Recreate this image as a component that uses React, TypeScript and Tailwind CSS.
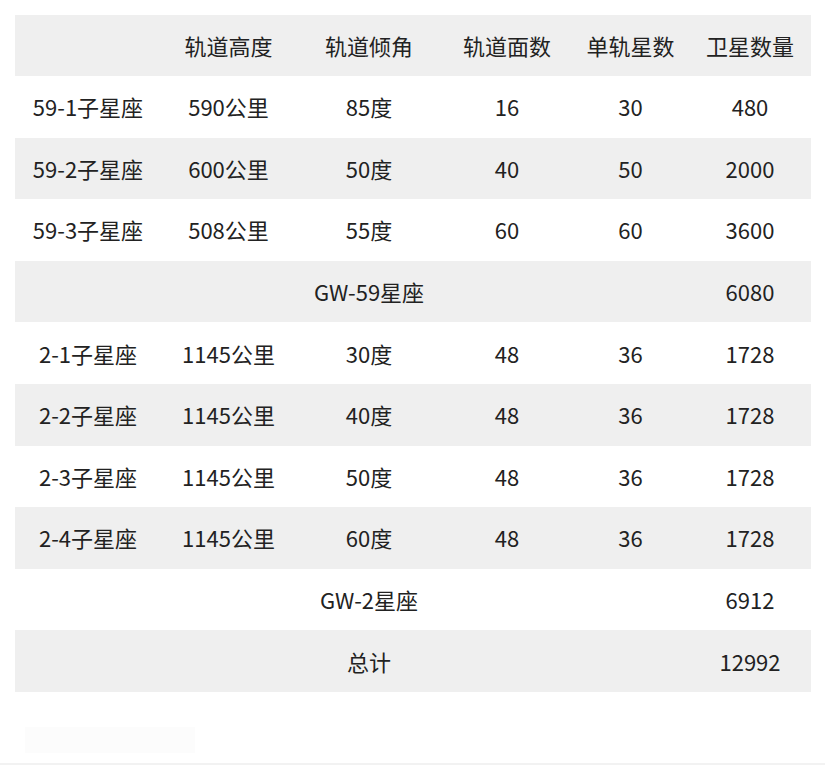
import React from "react";

type Row = { cells: string[] };

const rows: Row[] = [
  { cells: ["59-1子星座", "590公里", "85度", "16", "30", "480"] },
  { cells: ["59-2子星座", "600公里", "50度", "40", "50", "2000"] },
  { cells: ["59-3子星座", "508公里", "55度", "60", "60", "3600"] },
  { cells: ["", "", "GW-59星座", "", "", "6080"] },
  { cells: ["2-1子星座", "1145公里", "30度", "48", "36", "1728"] },
  { cells: ["2-2子星座", "1145公里", "40度", "48", "36", "1728"] },
  { cells: ["2-3子星座", "1145公里", "50度", "48", "36", "1728"] },
  { cells: ["2-4子星座", "1145公里", "60度", "48", "36", "1728"] },
  { cells: ["", "", "GW-2星座", "", "", "6912"] },
  { cells: ["", "", "总计", "", "", "12992"] },
];

const header = ["", "轨道高度", "轨道倾角", "轨道面数", "单轨星数", "卫星数量"];

export default function App() {
  return (
    <div
      className="w-[825px] h-[765px] bg-white relative overflow-hidden text-[#222]"
      style={{ fontFamily: '"Noto Sans CJK SC", "Noto Sans", sans-serif' }}
    >
      <div className="pt-[15px] pl-[15px]">
        <table className="table-fixed border-collapse w-[796px] text-[22px]">
          <colgroup>
            <col className="w-[146px]" />
            <col className="w-[135px]" />
            <col className="w-[146px]" />
            <col className="w-[130px]" />
            <col className="w-[117px]" />
            <col className="w-[122px]" />
          </colgroup>
          <thead>
            <tr className="bg-[#efefef] h-[61px]">
              {header.map((h, i) => (
                <th key={i} className="font-normal text-center whitespace-nowrap p-0">
                  {h}
                </th>
              ))}
            </tr>
          </thead>
          <tbody>
            {rows.map((r, ri) => (
              <tr
                key={ri}
                className={(ri % 2 === 1 ? "bg-[#efefef]" : "bg-white") + " h-[61.6px]"}
              >
                {r.cells.map((c, ci) => (
                  <td key={ci} className="text-center whitespace-nowrap p-0">
                    {c}
                  </td>
                ))}
              </tr>
            ))}
          </tbody>
        </table>
      </div>
      <div className="absolute left-[25px] top-[727px] w-[170px] h-[26px] bg-[#fcfcfc]" />
      <div className="absolute left-0 right-0 top-[763px] h-[2px] bg-[#f2f2f2]" />
    </div>
  );
}
